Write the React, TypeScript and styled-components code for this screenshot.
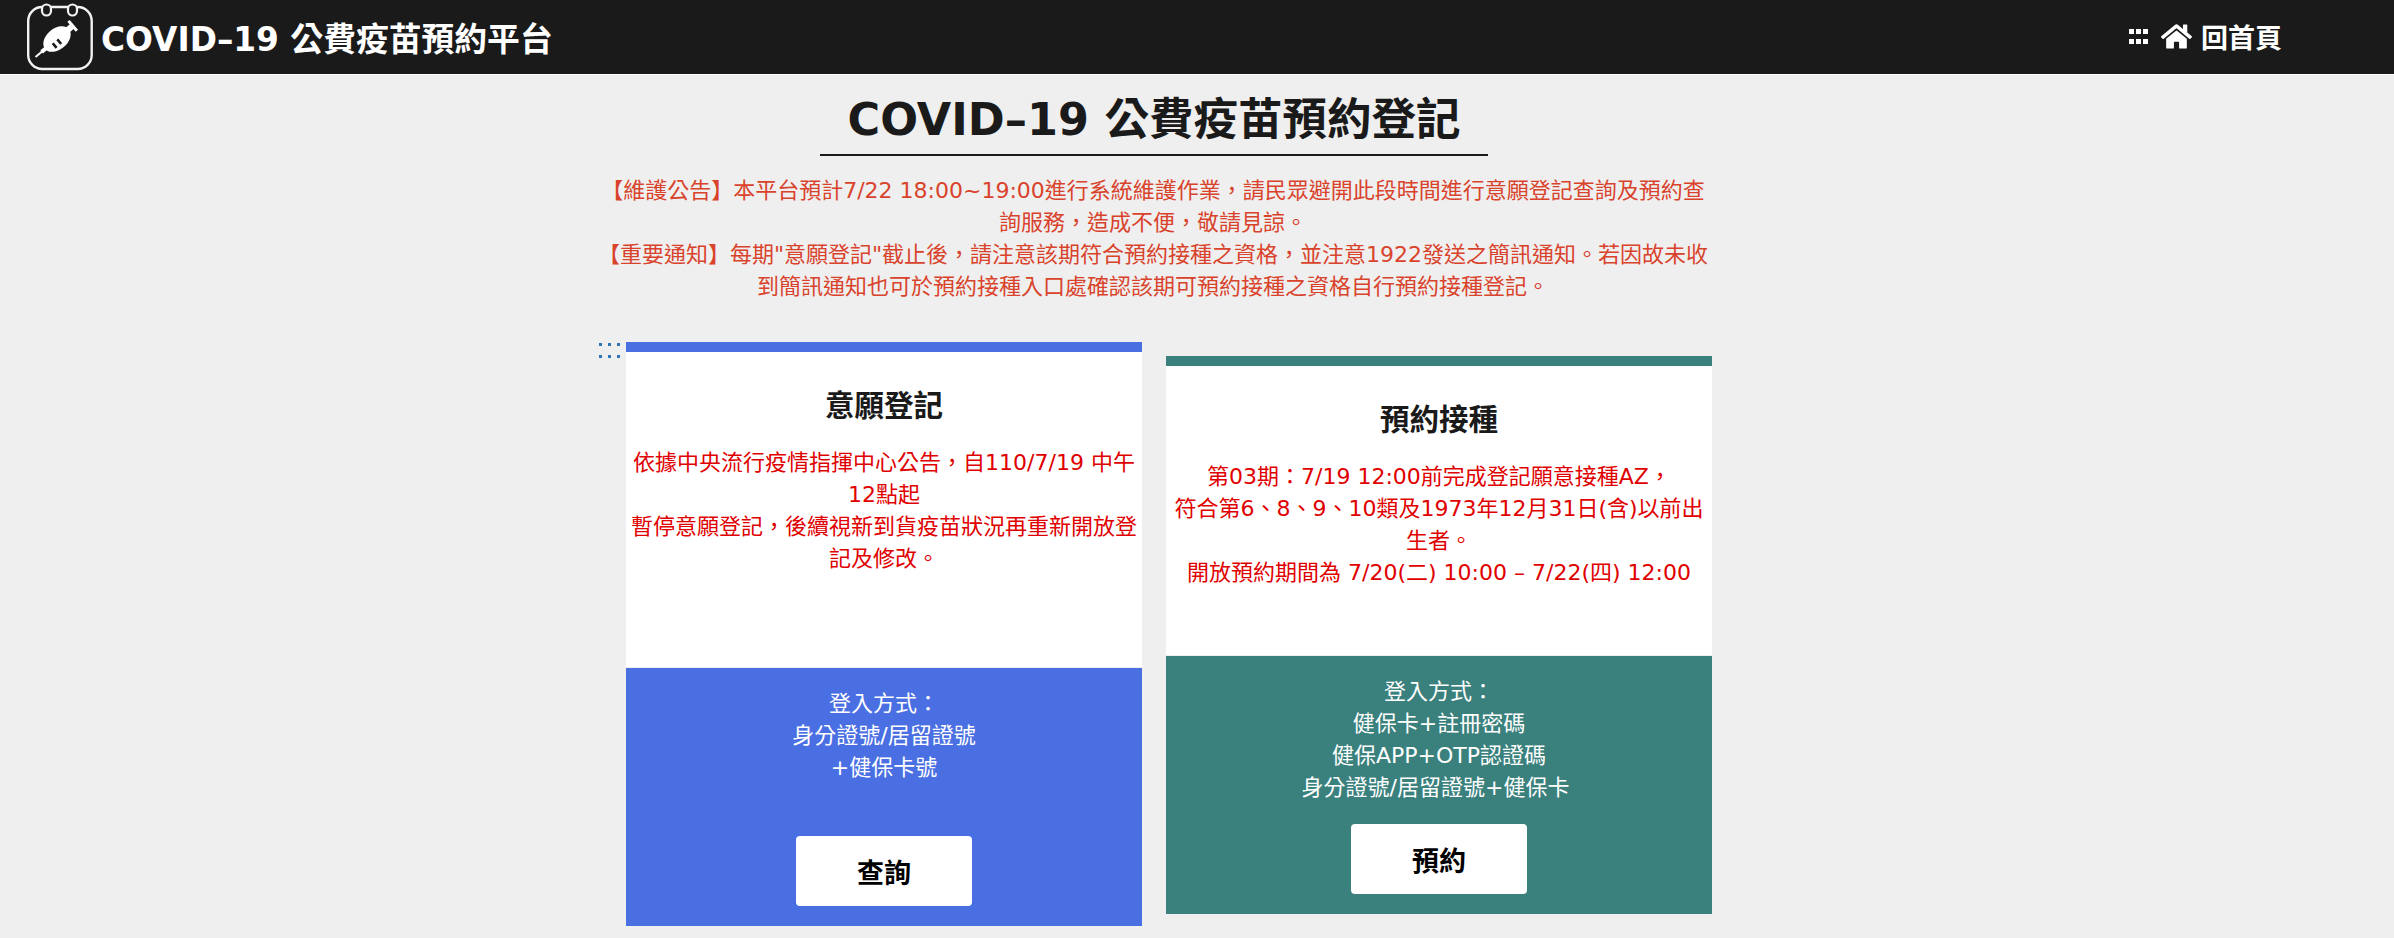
import styled, { createGlobalStyle } from 'styled-components';
import { FaHome } from 'react-icons/fa';

const GlobalStyle = createGlobalStyle`
  html, body {
    margin: 0;
    padding: 0;
    background-color: #efefef;
    font-family: 'DejaVu Sans', 'Noto Sans CJK TC', sans-serif;
  }
  * {
    box-sizing: border-box;
  }
`;

const Header = styled.header`
  height: 75px;
  padding: 0 112px 1px 24px;
  display: flex;
  align-items: center;
  justify-content: space-between;
  background-color: #1a1a1a;
  border-bottom: 1px solid #fff;
  color: #fff;
`;

const Brand = styled.div`
  display: flex;
  align-items: center;
  gap: 5px;
  font-size: 32.8px;
  font-weight: 700;
`;

const HomeLink = styled.a`
  display: flex;
  align-items: center;
  font-size: 27px;
  font-weight: 700;
  color: #fff;

  svg {
    margin: 0 9px 0 13px;
  }
`;

const Dots = styled.span<{ $color: string; $size: number; $colGap: number; $rowGap: number }>`
  display: grid;
  grid-template-columns: repeat(3, ${({ $size }) => $size}px);
  column-gap: ${({ $colGap }) => $colGap}px;
  row-gap: ${({ $rowGap }) => $rowGap}px;
  & > i {
    width: ${({ $size }) => $size}px;
    height: ${({ $size }) => $size}px;
    background-color: ${({ $color }) => $color};
  }
`;

const Main = styled.main`
  width: 1120px;
  margin-left: 596px;
  display: flex;
  flex-direction: column;
  align-items: center;
`;

const PageTitle = styled.h1`
  width: 668px;
  margin: 0 0 0 -4px;
  padding: 18px 0 7px;
  border-bottom: 2px solid #1a1a1a;
  font-size: 44.5px;
  line-height: 54px;
  font-weight: 700;
  text-align: center;
  color: #1a1a1a;
`;

const Notice = styled.p`
  margin: 19px 0 0 -6px;
  width: 1124px;
  flex: none;
  font-size: 22px;
  line-height: 32px;
  text-align: center;
  color: #d9432c;
`;

const Cards = styled.div`
  align-self: stretch;
  margin-top: 39px;
  padding-right: 4px;
  display: flex;
  justify-content: flex-end;
  align-items: flex-start;
  gap: 24px;
`;

const Card = styled.section<{ $width: number; $color: string; $offset?: number }>`
  position: relative;
  width: ${({ $width }) => $width}px;
  margin-top: ${({ $offset }) => $offset ?? 0}px;
  border-top: 10px solid ${({ $color }) => $color};
`;

const CornerDots = styled.div`
  position: absolute;
  left: -27px;
  top: -9px;
`;

const CardBody = styled.div<{ $height: number }>`
  height: ${({ $height }) => $height}px;
  padding: 33px 3px 0;
  background-color: #fff;
  text-align: center;
`;

const CardTitle = styled.h2`
  margin: 0 0 20px;
  font-size: 29.5px;
  line-height: 42px;
  font-weight: 700;
  color: #1a1a1a;
`;

const CardText = styled.p`
  margin: 0;
  font-size: 22px;
  line-height: 32px;
  color: #e00000;
`;

const LoginPanel = styled.div<{ $color: string }>`
  height: 258px;
  margin-top: 1px;
  padding: 20px 0;
  display: flex;
  flex-direction: column;
  align-items: center;
  background-color: ${({ $color }) => $color};
  color: #fff;
  font-size: 22px;
  line-height: 32px;
  text-align: center;
`;

const LoginText = styled.div`
  white-space: pre-wrap;
`;

const ActionButton = styled.button`
  width: 176px;
  height: 70px;
  margin-top: auto;
  border: 0;
  border-radius: 4px;
  background-color: #fff;
  color: #000;
  font-family: inherit;
  font-size: 27px;
  font-weight: 700;
`;

const threeDots = Array.from({ length: 6 }, (_, i) => <i key={i} />);

function SyringeLogo() {
  return (
    <svg width="72" height="72" viewBox="0 0 72 72" fill="none">
      <rect x="4.2" y="6" width="63.5" height="62" rx="14" stroke="#f2f2f2" strokeWidth="2.4" />
      <rect x="18" y="3.5" width="9" height="11" rx="4.5" fill="#1a1a1a" stroke="#f2f2f2" strokeWidth="2.2" />
      <rect x="44" y="3.5" width="9" height="11" rx="4.5" fill="#1a1a1a" stroke="#f2f2f2" strokeWidth="2.2" />
      <g transform="rotate(-40 33 38)">
        <path d="M5 38h15" stroke="#fff" strokeWidth="2" />
        <path d="M13 38h8" stroke="#fff" strokeWidth="4" />
        <ellipse cx="33" cy="38" rx="15.5" ry="10.5" fill="#fff" />
        <rect x="46" y="35" width="7" height="6" fill="#fff" />
        <rect x="52" y="31.5" width="3" height="13" fill="#fff" />
        <path d="M27 38.5v6M33 38.5v6" stroke="#1a1a1a" strokeWidth="2.6" />
      </g>
    </svg>
  );
}

export default function App() {
  return (
    <>
      <GlobalStyle />
      <Header>
        <Brand>
          <SyringeLogo />
          COVID–19 公費疫苗預約平台
        </Brand>
        <HomeLink>
          <Dots $color="#fff" $size={5} $colGap={2} $rowGap={5}>
            {threeDots}
          </Dots>
          <FaHome size={31} />
          回首頁
        </HomeLink>
      </Header>
      <Main>
        <PageTitle>COVID–19 公費疫苗預約登記</PageTitle>
        <Notice>
          【維護公告】本平台預計7/22 18:00~19:00進行系統維護作業，請民眾避開此段時間進行意願登記查詢及預約查詢服務，造成不便，敬請見諒。
          <br />
          【重要通知】每期"意願登記"截止後，請注意該期符合預約接種之資格，並注意1922發送之簡訊通知。若因故未收到簡訊通知也可於預約接種入口處確認該期可預約接種之資格自行預約接種登記。
        </Notice>
        <Cards>
          <Card $width={516} $color="#4a6fe3">
            <CornerDots>
              <Dots $color="#2e75b6" $size={3} $colGap={6} $rowGap={9}>
                {threeDots}
              </Dots>
            </CornerDots>
            <CardBody $height={315}>
              <CardTitle>意願登記</CardTitle>
              <CardText>
                依據中央流行疫情指揮中心公告，自110/7/19 中午12點起
                <br />
                暫停意願登記，後續視新到貨疫苗狀況再重新開放登記及修改。
              </CardText>
            </CardBody>
            <LoginPanel $color="#4a6fe3">
              <LoginText>
                登入方式：
                <br />
                身分證號/居留證號
                <br />
                +健保卡號
              </LoginText>
              <ActionButton>查詢</ActionButton>
            </LoginPanel>
          </Card>
          <Card $width={546} $color="#3a817e" $offset={14}>
            <CardBody $height={289}>
              <CardTitle>預約接種</CardTitle>
              <CardText>
                第03期：7/19 12:00前完成登記願意接種AZ，
                <br />
                符合第6、8、9、10類及1973年12月31日(含)以前出生者。
                <br />
                開放預約期間為 7/20(二) 10:00 – 7/22(四) 12:00
              </CardText>
            </CardBody>
            <LoginPanel $color="#3a817e">
              <LoginText>
                登入方式：
                <br />
                健保卡+註冊密碼
                <br />
                健保APP+OTP認證碼
                <br />
                身分證號/居留證號+健保卡{' '}
              </LoginText>
              <ActionButton>預約</ActionButton>
            </LoginPanel>
          </Card>
        </Cards>
      </Main>
    </>
  );
}
